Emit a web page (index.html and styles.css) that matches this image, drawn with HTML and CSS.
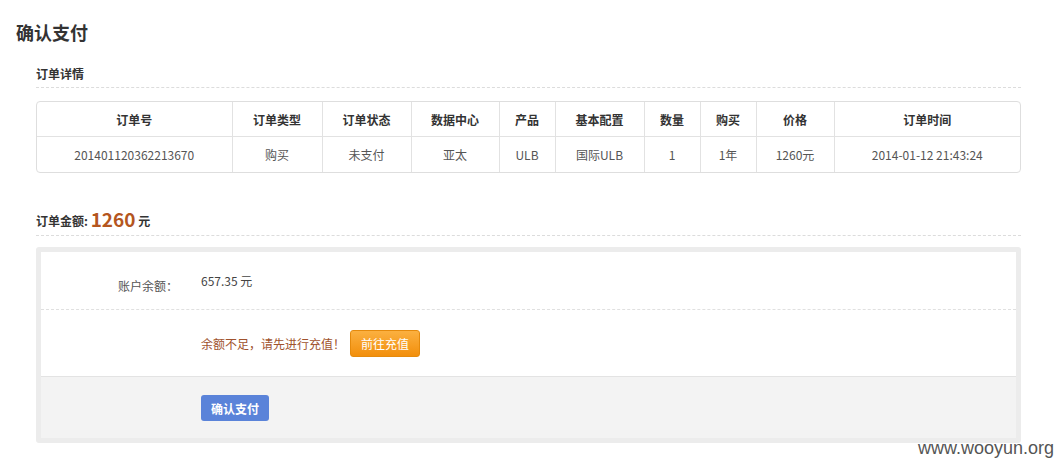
FILE: index.html
```html
<!DOCTYPE html>
<html lang="zh-CN">
<head>
    <meta charset="UTF-8">
    <title>确认支付</title>
    <link rel="stylesheet" href="styles.css">
</head>
<body>
    <h1 class="page-title">确认支付</h1>

    <div class="content">
        <!-- 订单详情 -->
        <h2 class="section-title">订单详情</h2>
        <div class="table-wrap">
            <table class="order-table">
                <colgroup>
                    <col style="width: 195px">
                    <col style="width: 90px">
                    <col style="width: 89px">
                    <col style="width: 88px">
                    <col style="width: 56px">
                    <col style="width: 89px">
                    <col style="width: 56px">
                    <col style="width: 56px">
                    <col style="width: 78px">
                    <col>
                </colgroup>
                <thead>
                    <tr>
                        <th>订单号</th>
                        <th>订单类型</th>
                        <th>订单状态</th>
                        <th>数据中心</th>
                        <th>产品</th>
                        <th>基本配置</th>
                        <th>数量</th>
                        <th>购买</th>
                        <th>价格</th>
                        <th>订单时间</th>
                    </tr>
                </thead>
                <tbody>
                    <tr>
                        <td>201401120362213670</td>
                        <td>购买</td>
                        <td>未支付</td>
                        <td>亚太</td>
                        <td>ULB</td>
                        <td>国际ULB</td>
                        <td>1</td>
                        <td>1年</td>
                        <td>1260元</td>
                        <td>2014-01-12 21:43:24</td>
                    </tr>
                </tbody>
            </table>
        </div>

        <!-- 订单金额 -->
        <h2 class="section-title total">订单金额: <span class="amount">1260</span> 元</h2>

        <div class="pay-panel">
            <div class="pay-row balance">
                <div class="pay-label">账户余额：</div>
                <div class="pay-value">657.35 元</div>
            </div>
            <div class="pay-row notice">
                <div class="pay-label"></div>
                <div class="pay-value">
                    <span class="warn">余额不足，请先进行充值！</span>
                    <button class="btn btn-orange" type="button">前往充值</button>
                </div>
            </div>
            <div class="pay-row footer">
                <div class="pay-label"></div>
                <div class="pay-value">
                    <button class="btn btn-blue" type="button">确认支付</button>
                </div>
            </div>
        </div>
    </div>

    <div class="watermark">www.wooyun.org</div>
</body>
</html>
```

FILE: styles.css
```css
body{
    margin: 0;
    font-family: "Noto Sans CJK SC", "Liberation Sans", sans-serif;
    font-size: 12px;
    color: #444;
    background: #fff;
    position: relative;
    height: 458px;
    overflow: hidden;
}
.page-title{
    margin: 20px 0 0 16px;
    font-size: 18px;
    line-height: 24px;
    font-weight: bold;
    color: #333;
}
.content{
    padding: 0 35px 0 36px;
}
.section-title{
    margin: 20px 0 0 0;
    font-size: 12px;
    line-height: 20px;
    height: 20px;
    font-weight: bold;
    color: #333;
    padding-bottom: 3px;
    border-bottom: 1px dashed #dcdcdc;
}
.section-title.total{
    margin-top: 36px;
    line-height: 24px;
    height: 24px;
    padding-bottom: 2px;
}
.amount{
    font-size: 19px;
    line-height: 20px;
    color: #b4561e;
    vertical-align: -1px;
}
.table-wrap{
    margin-top: 13px;
    border: 1px solid #dedede;
    border-radius: 4px;
    overflow: hidden;
}
.order-table{
    width: 100%;
    border-collapse: collapse;
    table-layout: fixed;
}
.order-table th,
.order-table td{
    text-align: center;
    border-left: 1px solid #e2e2e2;
    padding: 0;
    font-size: 12px;
}
.order-table th:first-child,
.order-table td:first-child{
    border-left: none;
}
.order-table th{
    height: 34px;
    font-weight: bold;
    color: #333;
    border-bottom: 1px solid #e2e2e2;
}
.order-table td{
    height: 35px;
    color: #555;
}
.pay-panel{
    margin-top: 11px;
    border: 5px solid #ececec;
    border-radius: 3px;
    background: #fff;
}
.pay-row{
    display: grid;
    grid-template-columns: 137px 1fr;
    column-gap: 23px;
    align-items: center;
}
.pay-row.balance{
    height: 57px;
    border-bottom: 1px dashed #e0e0e0;
}
.pay-row.notice{
    height: 66px;
    border-bottom: 1px solid #e3e3e3;
}
.pay-row.footer{
    height: 61px;
    background: #f3f3f3;
    align-items: start;
}
.pay-row.footer .pay-value{
    padding-top: 18px;
}
.pay-label{
    text-align: right;
    color: #555;
}
.balance .pay-label{
    padding-top: 9px;
}
.balance .pay-value{
    color: #444;
    padding-bottom: 1px;
}
.pay-value{
    display: flex;
    align-items: center;
}
.warn{
    color: #a0522d;
}
.btn{
    font-family: "Noto Sans CJK SC", "Liberation Sans", sans-serif;
    font-size: 12px;
    color: #fff;
    border-radius: 3px;
    cursor: pointer;
    padding: 0;
}
.btn-orange{
    margin-left: 5px;
    width: 70px;
    height: 27px;
    border: 1px solid #e58a0c;
    background: linear-gradient(#fbb040, #f28f0c);
}
.btn-blue{
    width: 68px;
    height: 26px;
    border: none;
    font-weight: bold;
    background: #5a83d9;
}
.watermark{
    position: absolute;
    right: 2px;
    bottom: 0;
    font-family: "Liberation Sans", sans-serif;
    font-size: 18px;
    line-height: 20px;
    color: #555;
}
```
